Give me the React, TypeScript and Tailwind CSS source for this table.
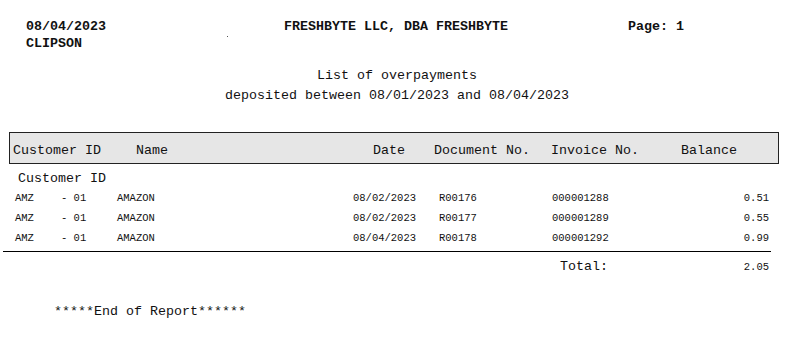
const rows = [
  { id: 'AMZ', sub: '- 01', name: 'AMAZON', date: '08/02/2023', doc: 'R00176', inv: '000001288', bal: '0.51' },
  { id: 'AMZ', sub: '- 01', name: 'AMAZON', date: '08/02/2023', doc: 'R00177', inv: '000001289', bal: '0.55' },
  { id: 'AMZ', sub: '- 01', name: 'AMAZON', date: '08/04/2023', doc: 'R00178', inv: '000001292', bal: '0.99' },
];

export default function App() {
  return (
    <div className="w-[794px] h-[341px] bg-white text-[#111] font-['Liberation_Mono',monospace] text-[13.33px] leading-[17px] whitespace-pre overflow-hidden">
      {/* Report heading */}
      <div className="pt-[18px]">
        <div className="flex pl-[26px] font-bold">
          <span className="w-[258px]">08/04/2023</span>
          <span className="w-[344px]">FRESHBYTE LLC, DBA FRESHBYTE</span>
          <span>Page: 1</span>
        </div>
        <div className="flex pl-[26px]">
          <span className="w-[201px] font-bold">CLIPSON</span>
          <span className="w-px h-px mt-[1px] bg-[#555]" />
        </div>
      </div>

      <div className="mt-[15px] text-center">List of overpayments</div>
      <div className="mt-[3px] text-center">deposited between 08/01/2023 and 08/04/2023</div>

      {/* Column header */}
      <div className="mt-[28px] ml-[9px] w-[770px] h-[32px] border border-[#222] bg-[#e6e6e6] flex pt-[9px] pl-[3px]">
        <span className="w-[123px]">Customer ID</span>
        <span className="w-[237px]">Name</span>
        <span className="w-[61px]">Date</span>
        <span className="w-[117px]">Document No.</span>
        <span className="w-[130px]">Invoice No.</span>
        <span>Balance</span>
      </div>

      <div className="mt-[6px] pl-[18px]">Customer ID</div>

      {/* Detail rows */}
      <div className="mt-[1px] text-[10.5px] leading-[20px]">
        {rows.map((r, i) => (
          <div key={i} className="flex pl-[15px] pr-[25px]">
            <span className="w-[46px]">{r.id}</span>
            <span className="w-[56px]">{r.sub}</span>
            <span className="w-[236px]">{r.name}</span>
            <span className="w-[86px]">{r.date}</span>
            <span className="w-[113px]">{r.doc}</span>
            <span className="flex-1">{r.inv}</span>
            <span>{r.bal}</span>
          </div>
        ))}
      </div>

      <div className="mt-[3px] ml-[3px] w-[768px] h-px bg-black" />

      {/* Total */}
      <div className="mt-[5px] flex items-baseline pl-[560px] pr-[25px] leading-[20px]">
        <span className="flex-1">Total:</span>
        <span className="text-[10.5px]">2.05</span>
      </div>

      <div className="mt-[26px] pl-[54px]">*****End of Report******</div>
    </div>
  );
}
